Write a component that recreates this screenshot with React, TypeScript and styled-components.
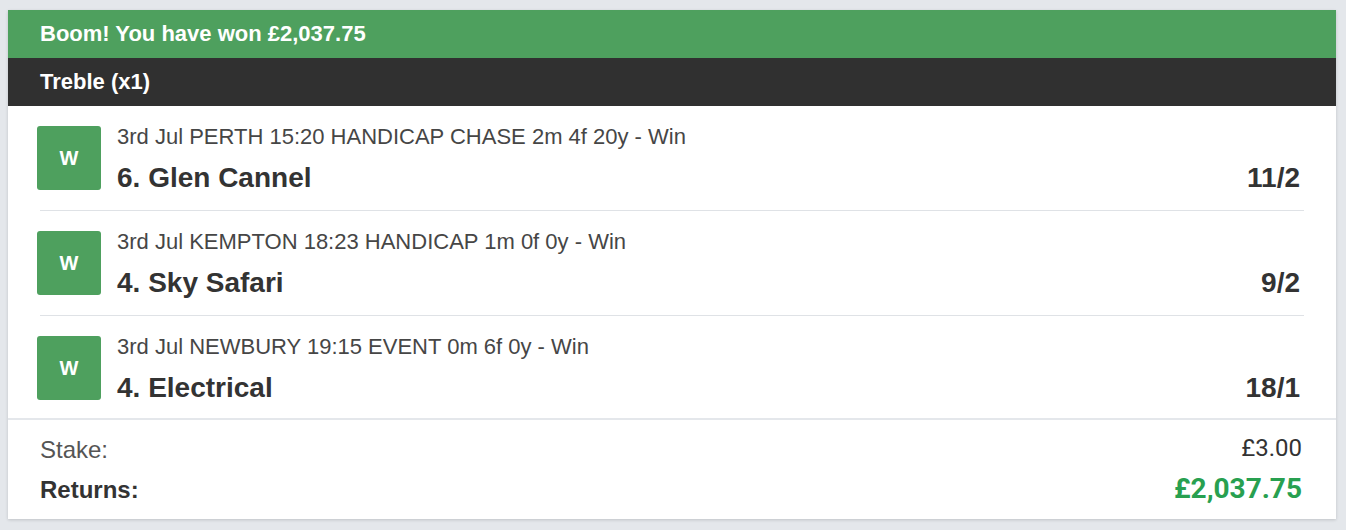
import React from "react";
import styled, { createGlobalStyle } from "styled-components";

const GlobalStyle = createGlobalStyle`
  html, body {
    margin: 0;
    padding: 0;
    background: #e4e7eb;
  }
  body {
    font-family: "Liberation Sans", Arial, sans-serif;
  }
`;

type Selection = {
  event: string;
  runner: string;
  odds: string;
};

const selections: Selection[] = [
  {
    event: "3rd Jul PERTH 15:20 HANDICAP CHASE 2m 4f 20y - Win",
    runner: "6. Glen Cannel",
    odds: "11/2",
  },
  {
    event: "3rd Jul KEMPTON 18:23 HANDICAP 1m 0f 0y - Win",
    runner: "4. Sky Safari",
    odds: "9/2",
  },
  {
    event: "3rd Jul NEWBURY 19:15 EVENT 0m 6f 0y - Win",
    runner: "4. Electrical",
    odds: "18/1",
  },
];

export default function App() {
  return (
    <Page>
      <GlobalStyle />
      <Card>
        <Banner>Boom! You have won £2,037.75</Banner>
        <BetType>Treble (x1)</BetType>
        <Legs>
          {selections.map((s, i) => (
            <Leg key={i} $last={i === selections.length - 1}>
              <Badge>W</Badge>
              <LegInfo>
                <EventName>{s.event}</EventName>
                <RunnerLine>
                  <Runner>{s.runner}</Runner>
                  <Odds>{s.odds}</Odds>
                </RunnerLine>
              </LegInfo>
            </Leg>
          ))}
        </Legs>
        <Summary>
          <StakeRow>
            <StakeLabel>Stake:</StakeLabel>
            <StakeValue>£3.00</StakeValue>
          </StakeRow>
          <SummaryRow>
            <ReturnsLabel>Returns:</ReturnsLabel>
            <ReturnsValue>£2,037.75</ReturnsValue>
          </SummaryRow>
        </Summary>
      </Card>
    </Page>
  );
}

const Page = styled.div`
  padding: 10px 10px 10px 8px;
`;

const Card = styled.div`
  background: #fff;
  box-shadow: 0 1px 3px rgba(0, 0, 0, 0.16);
`;

const Banner = styled.div`
  height: 48px;
  display: flex;
  align-items: center;
  padding: 0 32px;
  background: #4ea05e;
  color: #fff;
  font-size: 22px;
  font-weight: 700;
`;

const BetType = styled(Banner)`
  background: #303030;
`;

const Legs = styled.div`
  padding: 0 32px;
`;

const Leg = styled.div<{ $last: boolean }>`
  display: flex;
  gap: 16px;
  padding: 18px 0 ${(p) => (p.$last ? "14px" : "16px")};
  border-bottom: ${(p) => (p.$last ? "none" : "1px solid #dfe2e6")};
`;

const Badge = styled.div`
  flex: 0 0 64px;
  height: 64px;
  margin: 2px 0 0 -3px;
  border-radius: 3px;
  background: #4ea05e;
  color: #fff;
  font-size: 20px;
  font-weight: 700;
  display: flex;
  align-items: center;
  justify-content: center;
`;

const LegInfo = styled.div`
  flex: 1;
  display: flex;
  flex-direction: column;
  gap: 12px;
`;

const EventName = styled.div`
  font-size: 22px;
  line-height: 26px;
  color: #464646;
`;

const RunnerLine = styled.div`
  display: flex;
  justify-content: space-between;
  align-items: baseline;
  font-size: 28px;
  line-height: 32px;
  font-weight: 700;
  color: #333;
`;

const Runner = styled.span``;

const Odds = styled.span`
  margin-right: 4px;
`;

const Summary = styled.div`
  border-top: 2px solid #e4e7eb;
  padding: 9px 34px 9px 32px;
`;

const SummaryRow = styled.div`
  display: flex;
  justify-content: space-between;
  align-items: baseline;
  line-height: 41px;
`;

const StakeRow = styled(SummaryRow)`
  margin-bottom: -3px;
`;

const StakeLabel = styled.span`
  font-size: 24px;
  color: #555;
`;

const ReturnsLabel = styled.span`
  font-size: 24px;
  font-weight: 700;
  color: #333;
`;

const StakeValue = styled.span`
  font-family: Roboto, "Liberation Sans", sans-serif;
  font-size: 24px;
  color: #333;
  position: relative;
  top: -2px;
`;

const ReturnsValue = styled.span`
  font-family: Roboto, "Liberation Sans", sans-serif;
  font-size: 28px;
  font-weight: 700;
  color: #28a050;
`;
